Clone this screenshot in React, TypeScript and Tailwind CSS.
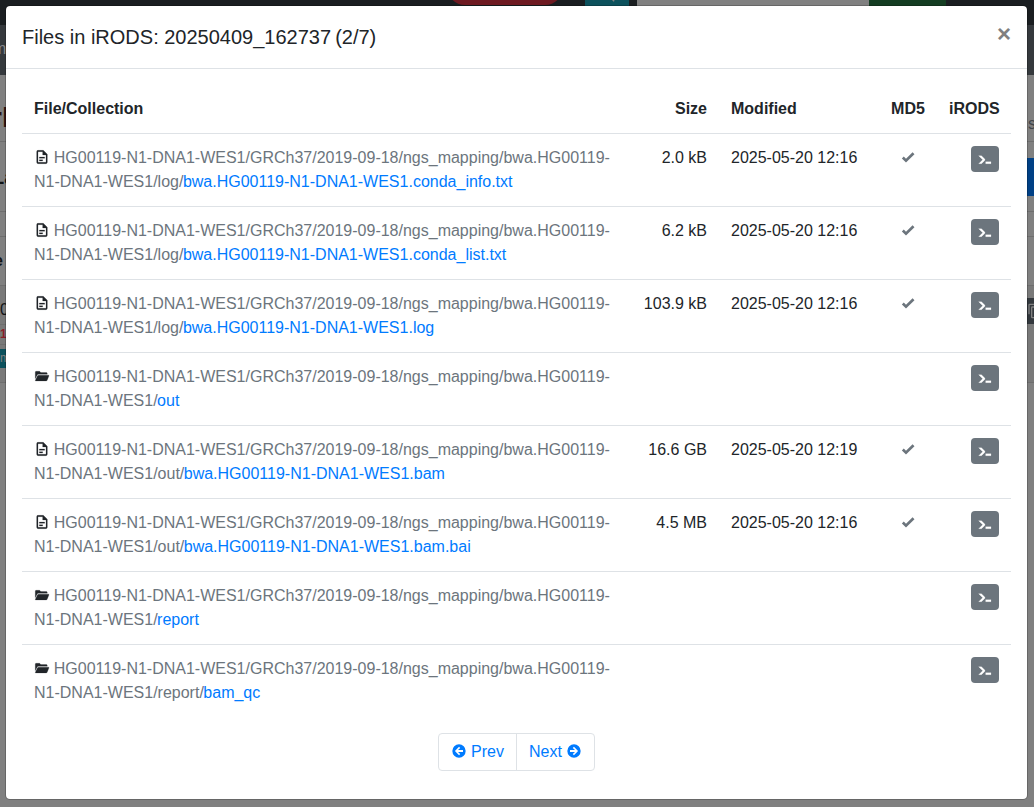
import React from "react";

type Entry = {
  kind: "file" | "folder";
  dir: string;
  name: string;
  size?: string;
  modified?: string;
};

const BASE = "HG00119-N1-DNA1-WES1/GRCh37/2019-09-18/ngs_mapping/bwa.HG00119-N1-DNA1-WES1/";

const entries: Entry[] = [
  { kind: "file", dir: "log/", name: "bwa.HG00119-N1-DNA1-WES1.conda_info.txt", size: "2.0 kB", modified: "2025-05-20 12:16" },
  { kind: "file", dir: "log/", name: "bwa.HG00119-N1-DNA1-WES1.conda_list.txt", size: "6.2 kB", modified: "2025-05-20 12:16" },
  { kind: "file", dir: "log/", name: "bwa.HG00119-N1-DNA1-WES1.log", size: "103.9 kB", modified: "2025-05-20 12:16" },
  { kind: "folder", dir: "", name: "out" },
  { kind: "file", dir: "out/", name: "bwa.HG00119-N1-DNA1-WES1.bam", size: "16.6 GB", modified: "2025-05-20 12:19" },
  { kind: "file", dir: "out/", name: "bwa.HG00119-N1-DNA1-WES1.bam.bai", size: "4.5 MB", modified: "2025-05-20 12:16" },
  { kind: "folder", dir: "", name: "report" },
  { kind: "folder", dir: "report/", name: "bam_qc" },
];

const paths = {
  file: "M6,2A2,2 0 0,0 4,4V20A2,2 0 0,0 6,22H18A2,2 0 0,0 20,20V8L14,2H6M6,4H13V9H18V20H6V4M8,12V14H16V12H8M8,16V18H13V16H8Z",
  folder: "M1.9,6A1.2,1.2 0 0,1 3.1,4.9H8.5L10.2,6.8H18.5A1.4,1.4 0 0,1 19.9,8.1V9.5H6.4A2,2 0 0,0 4.8,10.5L1.9,16V6M6.8,10.8H21.8A0.7,0.7 0 0,1 22.5,11.8L19.8,18.4A1.8,1.8 0 0,1 18.2,19.4H2.6A0.7,0.7 0 0,1 2,18.4L5.3,11.8A1.6,1.6 0 0,1 6.8,10.8Z",
  check: "M9,20.42L2.79,14.21L5.62,11.38L9,14.77L18.88,4.88L21.71,7.71L9,20.42Z",
  console: "M13,19V16H21V19H13M8.5,13L2.47,7H6.71L11.67,11.95C12.25,12.54 12.25,13.5 11.67,14.07L6.74,19H2.5L8.5,13Z",
  left: "M2,12A10,10 0 0,1 12,2A10,10 0 0,1 22,12A10,10 0 0,1 12,22A10,10 0 0,1 2,12M18,10.6H10.5L13.8,7.5L12.08,5.8L5.9,12L12.08,18.2L13.8,16.5L10.5,13.4H18V10.6Z",
  right: "M22,12A10,10 0 0,1 12,22A10,10 0 0,1 2,12A10,10 0 0,1 12,2A10,10 0 0,1 22,12M6,13.4H13.5L10.2,16.5L11.92,18.2L18.1,12L11.92,5.8L10.2,7.5L13.5,10.6H6V13.4Z",
  copy: "M19,21H8V7H19M19,5H8A2,2 0 0,0 6,7V21A2,2 0 0,0 8,23H19A2,2 0 0,0 21,21V7A2,2 0 0,0 19,5M16,1H4A2,2 0 0,0 2,3V17H4V3H16V1Z",
  search: "M9.5,3A6.5,6.5 0 0,1 16,9.5C16,11.11 15.41,12.59 14.44,13.73L14.71,14H15.5L20.5,19L19,20.5L14,15.5V14.71L13.73,14.44C12.59,15.41 11.11,16 9.5,16A6.5,6.5 0 0,1 3,9.5A6.5,6.5 0 0,1 9.5,3M9.5,5C7,5 5,7 5,9.5C5,12 7,14 9.5,14C12,14 14,12 14,9.5C14,7 12,5 9.5,5Z",
};

function Icon({ name, className = "" }: { name: keyof typeof paths; className?: string }) {
  return (
    <svg viewBox="0 0 24 24" fill="currentColor" className={`inline-block size-4 shrink-0 ${className}`}>
      <path d={paths[name]} />
    </svg>
  );
}

function PageBehind() {
  return (
    <div className="absolute inset-0 flex flex-col overflow-hidden bg-[#808080]">
      <div className="flex h-[25px] shrink-0 items-start overflow-hidden bg-[#1a1e21]">
        <div className="-mt-8 ml-[447px] h-[37px] w-[116px] shrink-0 rounded-[18px] bg-[#6e1a22]" />
        <div className="ml-[22px] flex h-[25px] w-[44px] shrink-0 justify-center bg-[#0c515c] text-[#808080]">
          <Icon name="search" className="-mt-3 ml-1" />
        </div>
        <div className="ml-[8px] h-[25px] w-[232px] shrink-0 bg-[#808080]" />
        <div className="h-[25px] w-[77px] shrink-0 bg-[#143d22]" />
      </div>
      <div className="h-[50px] shrink-0 bg-[#35393d] text-[#86888a]">
        <div className="-ml-[7px] pt-[12px]">m</div>
      </div>
      <div className="flex h-[67px] shrink-0 items-center justify-between border-b border-[#6e6e6e]">
        <span className="-ml-[9px] pt-[20px] text-[28px] font-bold text-[#2a1212]">rl</span>
        <span className="-mr-[2px] pt-[32px] text-[#40454a]">s</span>
      </div>
      <div className="flex h-[70px] shrink-0 items-center justify-between border-b border-[#6e6e6e]">
        <span className="-ml-[8px] text-xl font-bold text-[#111416]">La</span>
        <span className="h-[38px] w-[7px] bg-[#004085]" />
      </div>
      <div className="h-[25px] shrink-0 border-b border-[#6e6e6e]" />
      <div className="flex h-[49px] shrink-0 items-center border-b border-[#6e6e6e] font-bold text-[#111416]">
        <span className="-ml-[6px]">e</span>
      </div>
      <div className="flex h-[97px] shrink-0 justify-between border-b border-[#6e6e6e] bg-[#797979]">
        <div className="flex flex-col">
          <div className="h-[38px] pt-[12px] text-[#111416]">0</div>
          <div className="h-[21px] border-y border-[#6e6e6e] text-xs font-bold leading-[19px] text-[#8b1f29]">1</div>
          <div className="mt-[4px] h-[19px] overflow-hidden bg-[#0c515c] text-xs leading-[19px] text-[#808080]">m</div>
        </div>
        <div className="mt-[12px] flex h-[26px] w-[7px] items-center overflow-hidden bg-[#33383d] text-[#808080]">
          <Icon name="copy" />
        </div>
      </div>
    </div>
  );
}

export default function App() {
  return (
    <div className="relative h-[807px] w-[1034px] overflow-hidden font-['Liberation_Sans',sans-serif] text-base leading-6 text-[#212529]">
      <PageBehind />
      <div className="absolute inset-0 p-[5px] pr-[6px]">
        <div role="dialog" className="flex h-[795px] w-[1023px] flex-col rounded-[5px] border border-black/20 bg-white bg-clip-padding">
          <header className="flex items-start justify-between border-b border-[#dee2e6] p-4">
            <h5 className="text-xl leading-[30px]">
              Files in iRODS: 20250409_162737<span className="tracking-[-1.5px]"> </span>(2/7)
            </h5>
            <button aria-label="Close" className="text-2xl leading-6 font-bold text-[#808080]">×</button>
          </header>
          <div className="p-4">
            <table className="w-[989px] table-fixed border-separate border-spacing-0">
              <colgroup>
                <col className="w-[610px]" />
                <col className="w-[87px]" />
                <col className="w-[160px]" />
                <col className="w-[58px]" />
                <col className="w-[74px]" />
              </colgroup>
              <thead>
                <tr>
                  <th className="p-3 text-left">File/Collection</th>
                  <th className="p-3 text-right">Size</th>
                  <th className="p-3 text-left">Modified</th>
                  <th className="p-3 text-center">MD5</th>
                  <th className="p-3 text-right">iRODS</th>
                </tr>
              </thead>
              <tbody>
                {entries.map((e) => (
                  <tr key={e.dir + e.name} className="h-[73px] align-top">
                    <td className="border-t border-[#dee2e6] py-3 pl-3 text-[#6c757d]">
                      <Icon
                        name={e.kind}
                        className="-mt-1 mr-[3.75px] stroke-current stroke-[0.3] align-middle text-[#212529]"
                      />
                      {BASE}
                      {e.dir}
                      <a className="-ml-[0.5px] text-[#007bff]">{e.name}</a>
                    </td>
                    <td className="border-t border-[#dee2e6] py-3 pr-3 text-right whitespace-nowrap">{e.size}</td>
                    <td className="border-t border-[#dee2e6] p-3 whitespace-nowrap">{e.modified}</td>
                    <td className="border-t border-[#dee2e6] p-3 text-center text-[#6c757d]">
                      {e.kind === "file" && <Icon name="check" className="-mt-1 align-middle" />}
                    </td>
                    <td className="border-t border-[#dee2e6] p-3">
                      <button className="ml-auto flex h-[26px] w-7 items-center justify-center rounded bg-[#6c757d] text-white">
                        <Icon name="console" className="stroke-current stroke-[0.3]" />
                      </button>
                    </td>
                  </tr>
                ))}
              </tbody>
            </table>
            <nav className="mt-4 flex justify-center">
              <div className="flex h-[38px] rounded border border-[#dee2e6] text-[#007bff]">
                <a className="flex items-center gap-1 border-r border-[#dee2e6] px-3">
                  <Icon name="left" className="-mt-0.5" />
                  Prev
                </a>
                <a className="flex items-center gap-1 px-3">
                  Next
                  <Icon name="right" className="-mt-0.5" />
                </a>
              </div>
            </nav>
          </div>
        </div>
      </div>
    </div>
  );
}
